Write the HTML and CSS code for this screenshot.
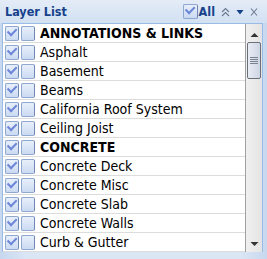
FILE: index.html
```html
<!DOCTYPE html>
<html lang="en">
<head>
	<meta charset="utf-8">
	<title>Layer List</title>
	<link rel="stylesheet" href="styles.css">
</head>
<body>
	<div id="panel">
		<header class="cabecera">
			<h1>Layer List</h1>
			<div class="herramientas">
				<span class="chk checked"></span>
				<span class="todos">All</span>
				<svg class="icono" width="9" height="10" viewBox="0 0 9 10"><path d="M1 5 L4.5 1.5 L8 5 M1 9 L4.5 5.5 L8 9" fill="none" stroke="#6b7b90" stroke-width="1.2"/></svg>
				<svg class="icono" width="8" height="10" viewBox="0 0 8 10"><path d="M0.5 3 L7.5 3 L4 7.5 Z" fill="#15428b"/></svg>
				<svg class="icono" width="8" height="10" viewBox="0 0 8 10"><path d="M1 1.5 L7 8.5 M7 1.5 L1 8.5" fill="none" stroke="#6b7b90" stroke-width="1.1"/></svg>
			</div>
		</header>

		<section class="cuerpo">
			<ul class="lista">
				<li class="grupo"><span class="chk checked"></span><span class="chk"></span>ANNOTATIONS &amp; LINKS</li>
				<li><span class="chk checked"></span><span class="chk"></span>Asphalt</li>
				<li><span class="chk checked"></span><span class="chk"></span>Basement</li>
				<li><span class="chk checked"></span><span class="chk"></span>Beams</li>
				<li><span class="chk checked"></span><span class="chk"></span>California Roof System</li>
				<li><span class="chk checked"></span><span class="chk"></span>Ceiling Joist</li>
				<li class="grupo"><span class="chk checked"></span><span class="chk"></span>CONCRETE</li>
				<li><span class="chk checked"></span><span class="chk"></span>Concrete Deck</li>
				<li><span class="chk checked"></span><span class="chk"></span>Concrete Misc</li>
				<li><span class="chk checked"></span><span class="chk"></span>Concrete Slab</li>
				<li><span class="chk checked"></span><span class="chk"></span>Concrete Walls</li>
				<li><span class="chk checked"></span><span class="chk"></span>Curb &amp; Gutter</li>
			</ul>
			<div class="scroll">
				<svg class="flecha" width="9" height="6" viewBox="0 0 9 6"><path d="M0.5 5 L4.5 1 L8.5 5 Z" fill="#333"/></svg>
				<div class="pista">
					<div class="barra">
						<span></span><span></span><span></span><span></span>
					</div>
				</div>
				<svg class="flecha" width="9" height="6" viewBox="0 0 9 6"><path d="M0.5 1 L8.5 1 L4.5 5 Z" fill="#333"/></svg>
			</div>
		</section>
		<footer class="pie"></footer>
	</div>
</body>
</html>
```

FILE: styles.css
```css
*{
	margin: 0px;
	padding: 0px;
	box-sizing: border-box;
}
body{
	font-family: "DejaVu Sans Condensed", "DejaVu Sans", Verdana, sans-serif;
	font-stretch: condensed;
	font-size: 14px;
	background-color: #dfe8f6;
}
#panel{
	width: 267px;
	height: 259px;
	display: flex;
	flex-direction: column;
	background: linear-gradient(to right, #c7d8ee, #dbe6f5 10%, #dbe6f5 90%, #c7d8ee);
}
.cabecera{
	height: 23px;
	display: flex;
	align-items: center;
	justify-content: space-between;
	padding: 0px 9px 0px 5px;
	background: linear-gradient(#e4ecf7, #d2e0f2);
}
.cabecera h1{
	font-size: 12.5px;
	font-weight: bold;
	color: #15428b;
}
.herramientas{
	display: flex;
	align-items: center;
	gap: 6px;
}
.herramientas .chk{
	width: 15px;
}
.todos{
	font-size: 12.5px;
	font-weight: bold;
	color: #15428b;
	margin-left: -7px;
}
.icono{
	display: block;
}
.cuerpo{
	display: flex;
	margin: 0px 4px 0px 2px;
	border-left: 1px solid #99bbe8;
	border-right: 1px solid #99bbe8;
	border-top: 1px solid #99bbe8;
	height: 229px;
	background-color: #fff;
}
.lista{
	list-style: none;
	flex: 1;
	border-right: 1px solid #a0a0a0;
}
.lista li{
	height: 19px;
	display: flex;
	align-items: center;
	border-bottom: 1px solid #dcdcdc;
	padding-left: 2px;
	color: #000;
	white-space: nowrap;
}
.lista li.grupo{
	font-weight: bold;
}
.chk{
	display: inline-block;
	flex-shrink: 0;
	width: 14px;
	height: 15px;
	margin-right: 2px;
	border: 1px solid #8fa8d0;
	border-right-color: #6f88b5;
	border-radius: 2px;
	background: linear-gradient(#e8effa, #cbdaf2);
	position: relative;
}
.chk + .chk{
	margin-right: 5px;
}
.chk.checked::after{
	content: "";
	position: absolute;
	left: 3px;
	top: 2px;
	width: 7px;
	height: 4px;
	border-left: 2px solid #6d86d8;
	border-bottom: 2px solid #6d86d8;
	transform: rotate(-45deg);
	transform-origin: 30% 70%;
}
.scroll{
	width: 16px;
	display: flex;
	flex-direction: column;
	align-items: center;
	background: linear-gradient(to right, #f0f0f0, #e4e4e4);
	padding: 8px 0px 5px 0px;
}
.flecha{
	display: block;
}
.pista{
	flex: 1;
	width: 100%;
	padding: 4px 1px 0px 1px;
}
.barra{
	height: 37px;
	border: 1px solid #6a6f78;
	border-radius: 2px;
	background: linear-gradient(to right, #e8ecf4, #cfd6e4);
	display: flex;
	flex-direction: column;
	align-items: center;
	justify-content: center;
	gap: 1px;
}
.barra span{
	display: block;
	width: 8px;
	height: 1px;
	background-color: #7a8290;
}
.pie{
	flex: 1;
}
```
